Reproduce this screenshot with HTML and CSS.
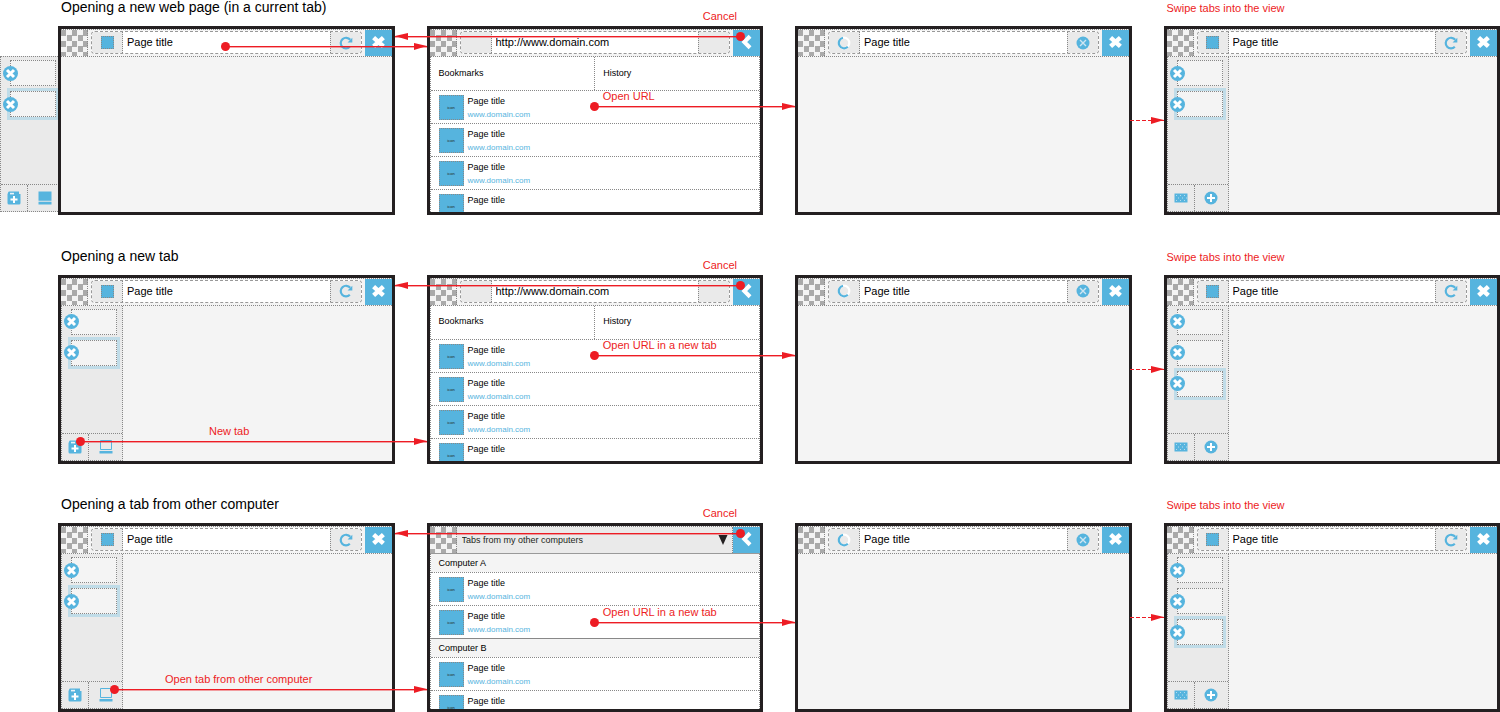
FILE: index.html
```html
<!DOCTYPE html>
<html lang="en">
<head>
    <meta charset="UTF-8">
    <meta name="viewport" content="width=device-width, initial-scale=1.0">
    <title>Browser tabs - interaction flows</title>
    <link rel="stylesheet" href="styles.css">
</head>
<body>
    <!-- Icon set -->
    <svg class="defs" aria-hidden="true">
        <symbol id="i-close" viewBox="0 0 27 27">
            <path d="M8 8.500L19 18.500M19 8.500L8 18.500" fill="none" stroke="#fff" stroke-width="5"/>
        </symbol>
        <symbol id="i-back" viewBox="0 0 27 27">
            <path d="M17.500 7L11 13.500L17.500 20" fill="none" stroke="#fff" stroke-width="4.500"/>
        </symbol>
        <symbol id="i-reload" viewBox="0 0 14 14">
            <path d="M10.800 10.800A5.300 5.300 0 1 1 11.200 3.800" fill="none" stroke="#56b4de" stroke-width="2.200"/>
            <path d="M13.300 1.800V6.500H8.600Z" fill="#56b4de"/>
        </symbol>
        <symbol id="i-loading" viewBox="0 0 14 14">
            <circle cx="7" cy="7" r="5.300" fill="none" stroke="#fff" stroke-width="2.200"/>
            <path d="M6 1.800A5.300 5.300 0 1 0 10.800 10.800" fill="none" stroke="#56b4de" stroke-width="2.200"/>
        </symbol>
        <symbol id="i-stop" viewBox="0 0 14 14">
            <circle cx="7" cy="7" r="6.500" fill="#56b4de"/>
            <path d="M4 4L10 10M10 4L4 10" fill="none" stroke="#cfe6f2" stroke-width="1.400"/>
        </symbol>
        <symbol id="i-remove" viewBox="0 0 15 15">
            <circle cx="7.500" cy="7.500" r="7.500" fill="#56b4de"/>
            <path d="M4 4L11 11M11 4L4 11" fill="none" stroke="#fff" stroke-width="3"/>
        </symbol>
        <symbol id="i-newtab" viewBox="0 0 14 14">
            <path d="M1 2Q1 .500 2 .500H12V3H13.500V12Q13.500 13.500 12 13.500H2Q.500 13.500 .500 12V3Z" fill="#56b4de"/>
            <path d="M3 1.800H7V3.400H3Z" fill="#ebf3f7"/>
            <path d="M7 5V12M3.500 8.500H10.500" stroke="#fff" stroke-width="2" fill="none"/>
        </symbol>
        <symbol id="i-computer" viewBox="0 0 14 14">
            <path d="M1.500 .500H12.500V9.500H1.500Z" fill="none" stroke="#56b4de"/>
            <path d="M.500 11H13.500V13.500H.500Z" fill="#56b4de"/>
        </symbol>
        <symbol id="i-computer-full" viewBox="0 0 14 14">
            <path d="M.500 .500H13.500V9.800H.500ZM.500 10.700H13.500V13.500H.500Z" fill="#56b4de"/>
        </symbol>
        <symbol id="i-grid" viewBox="0 0 14 14">
            <path d="M.500 2.500H13.500V11.500H.500Z" fill="#56b4de"/>
            <path d="M2 4.500H13M4 7H13M2 9.500H13" stroke="#b5dbec" stroke-width="1" stroke-dasharray="1 3" fill="none"/>
        </symbol>
        <symbol id="i-add" viewBox="0 0 14 14">
            <circle cx="7" cy="7" r="6.500" fill="#56b4de"/>
            <path d="M7 3V11M3 7H11" stroke="#fff" stroke-width="2" fill="none"/>
        </symbol>
    </svg>

    <main class="flows">
        <!-- Flow 1 -->
        <section class="flow">
            <header class="flow-head">
                <h2>Opening a new web page (in a current tab)</h2>
                <p class="swipe">Swipe tabs into the view</p>
            </header>
            <div class="steps">
                <div class="step">
                    <aside class="sidebar peek">
                        <ul class="tabs">
                            <li><button class="remove" aria-label="Close tab"><svg><use href="#i-remove"/></svg></button></li>
                            <li class="active"><button class="remove" aria-label="Close tab"><svg><use href="#i-remove"/></svg></button></li>
                        </ul>
                        <div class="tools">
                            <button aria-label="New tab"><svg><use href="#i-newtab"/></svg></button>
                            <button aria-label="Other computers"><svg><use href="#i-computer-full"/></svg></button>
                        </div>
                    </aside>
                    <div class="screen">
                        <div class="bar">
                            <span class="checker"></span>
                            <div class="address">
                                <span class="cell"><i class="favicon"></i></span>
                                <input type="text" value="Page title" aria-label="Address">
                                <button class="cell" aria-label="Reload"><svg><use href="#i-reload"/></svg></button>
                            </div>
                            <button class="square" aria-label="Close"><svg><use href="#i-close"/></svg></button>
                        </div>
                    </div>
                    <div class="arrow open-address"></div>
                </div>
                <div class="step">
                    <div class="screen">
                        <div class="bar">
                            <span class="checker"></span>
                            <div class="address">
                                <span class="cell"></span>
                                <input type="text" value="http://www.domain.com" aria-label="Address">
                                <span class="cell"></span>
                            </div>
                            <button class="square" aria-label="Back"><svg><use href="#i-back"/></svg></button>
                        </div>
                        <div class="panel">
                            <div class="sources">
                                <button>Bookmarks</button>
                                <button>History</button>
                            </div>
                            <ul class="pages">
                                <li><span class="icon">icon</span><div>Page title<a href="#">www.domain.com</a></div></li>
                                <li><span class="icon">icon</span><div>Page title<a href="#">www.domain.com</a></div></li>
                                <li><span class="icon">icon</span><div>Page title<a href="#">www.domain.com</a></div></li>
                                <li><span class="icon">icon</span><div>Page title</div></li>
                            </ul>
                        </div>
                    </div>
                    <div class="arrow back"><span>Cancel</span></div>
                    <div class="arrow open-url"><span>Open URL</span></div>
                </div>
                <div class="step">
                    <div class="screen">
                        <div class="bar">
                            <span class="checker"></span>
                            <div class="address">
                                <span class="cell"><svg><use href="#i-loading"/></svg></span>
                                <input type="text" value="Page title" aria-label="Address">
                                <button class="cell" aria-label="Stop"><svg><use href="#i-stop"/></svg></button>
                            </div>
                            <button class="square" aria-label="Close"><svg><use href="#i-close"/></svg></button>
                        </div>
                    </div>
                    <div class="arrow dashed"></div>
                </div>
                <div class="step">
                    <div class="screen">
                        <div class="bar">
                            <span class="checker"></span>
                            <div class="address">
                                <span class="cell"><i class="favicon"></i></span>
                                <input type="text" value="Page title" aria-label="Address">
                                <button class="cell" aria-label="Reload"><svg><use href="#i-reload"/></svg></button>
                            </div>
                            <button class="square" aria-label="Close"><svg><use href="#i-close"/></svg></button>
                        </div>
                        <aside class="sidebar">
                            <ul class="tabs">
                                <li><button class="remove" aria-label="Close tab"><svg><use href="#i-remove"/></svg></button></li>
                                <li class="active"><button class="remove" aria-label="Close tab"><svg><use href="#i-remove"/></svg></button></li>
                            </ul>
                            <div class="tools">
                                <button aria-label="All tabs"><svg><use href="#i-grid"/></svg></button>
                                <button aria-label="Add"><svg><use href="#i-add"/></svg></button>
                            </div>
                        </aside>
                    </div>
                </div>
            </div>
        </section>

        <!-- Flow 2 -->
        <section class="flow">
            <header class="flow-head">
                <h2>Opening a new tab</h2>
                <p class="swipe">Swipe tabs into the view</p>
            </header>
            <div class="steps">
                <div class="step">
                    <div class="screen">
                        <div class="bar">
                            <span class="checker"></span>
                            <div class="address">
                                <span class="cell"><i class="favicon"></i></span>
                                <input type="text" value="Page title" aria-label="Address">
                                <button class="cell" aria-label="Reload"><svg><use href="#i-reload"/></svg></button>
                            </div>
                            <button class="square" aria-label="Close"><svg><use href="#i-close"/></svg></button>
                        </div>
                        <aside class="sidebar">
                            <ul class="tabs">
                                <li><button class="remove" aria-label="Close tab"><svg><use href="#i-remove"/></svg></button></li>
                                <li class="active"><button class="remove" aria-label="Close tab"><svg><use href="#i-remove"/></svg></button></li>
                            </ul>
                            <div class="tools">
                                <button aria-label="New tab"><svg><use href="#i-newtab"/></svg></button>
                                <button aria-label="Other computers"><svg><use href="#i-computer"/></svg></button>
                            </div>
                        </aside>
                    </div>
                    <div class="arrow from-new-tab"><span>New tab</span></div>
                </div>
                <div class="step">
                    <div class="screen">
                        <div class="bar">
                            <span class="checker"></span>
                            <div class="address">
                                <span class="cell"></span>
                                <input type="text" value="http://www.domain.com" aria-label="Address">
                                <span class="cell"></span>
                            </div>
                            <button class="square" aria-label="Back"><svg><use href="#i-back"/></svg></button>
                        </div>
                        <div class="panel">
                            <div class="sources">
                                <button>Bookmarks</button>
                                <button>History</button>
                            </div>
                            <ul class="pages">
                                <li><span class="icon">icon</span><div>Page title<a href="#">www.domain.com</a></div></li>
                                <li><span class="icon">icon</span><div>Page title<a href="#">www.domain.com</a></div></li>
                                <li><span class="icon">icon</span><div>Page title<a href="#">www.domain.com</a></div></li>
                                <li><span class="icon">icon</span><div>Page title</div></li>
                            </ul>
                        </div>
                    </div>
                    <div class="arrow back"><span>Cancel</span></div>
                    <div class="arrow open-url"><span>Open URL in a new tab</span></div>
                </div>
                <div class="step">
                    <div class="screen">
                        <div class="bar">
                            <span class="checker"></span>
                            <div class="address">
                                <span class="cell"><svg><use href="#i-loading"/></svg></span>
                                <input type="text" value="Page title" aria-label="Address">
                                <button class="cell" aria-label="Stop"><svg><use href="#i-stop"/></svg></button>
                            </div>
                            <button class="square" aria-label="Close"><svg><use href="#i-close"/></svg></button>
                        </div>
                    </div>
                    <div class="arrow dashed"></div>
                </div>
                <div class="step">
                    <div class="screen">
                        <div class="bar">
                            <span class="checker"></span>
                            <div class="address">
                                <span class="cell"><i class="favicon"></i></span>
                                <input type="text" value="Page title" aria-label="Address">
                                <button class="cell" aria-label="Reload"><svg><use href="#i-reload"/></svg></button>
                            </div>
                            <button class="square" aria-label="Close"><svg><use href="#i-close"/></svg></button>
                        </div>
                        <aside class="sidebar">
                            <ul class="tabs">
                                <li><button class="remove" aria-label="Close tab"><svg><use href="#i-remove"/></svg></button></li>
                                <li><button class="remove" aria-label="Close tab"><svg><use href="#i-remove"/></svg></button></li>
                                <li class="active"><button class="remove" aria-label="Close tab"><svg><use href="#i-remove"/></svg></button></li>
                            </ul>
                            <div class="tools">
                                <button aria-label="All tabs"><svg><use href="#i-grid"/></svg></button>
                                <button aria-label="Add"><svg><use href="#i-add"/></svg></button>
                            </div>
                        </aside>
                    </div>
                </div>
            </div>
        </section>

        <!-- Flow 3 -->
        <section class="flow">
            <header class="flow-head">
                <h2>Opening a tab from other computer</h2>
                <p class="swipe">Swipe tabs into the view</p>
            </header>
            <div class="steps">
                <div class="step">
                    <div class="screen">
                        <div class="bar">
                            <span class="checker"></span>
                            <div class="address">
                                <span class="cell"><i class="favicon"></i></span>
                                <input type="text" value="Page title" aria-label="Address">
                                <button class="cell" aria-label="Reload"><svg><use href="#i-reload"/></svg></button>
                            </div>
                            <button class="square" aria-label="Close"><svg><use href="#i-close"/></svg></button>
                        </div>
                        <aside class="sidebar">
                            <ul class="tabs">
                                <li><button class="remove" aria-label="Close tab"><svg><use href="#i-remove"/></svg></button></li>
                                <li class="active"><button class="remove" aria-label="Close tab"><svg><use href="#i-remove"/></svg></button></li>
                            </ul>
                            <div class="tools">
                                <button aria-label="New tab"><svg><use href="#i-newtab"/></svg></button>
                                <button aria-label="Other computers"><svg><use href="#i-computer"/></svg></button>
                            </div>
                        </aside>
                    </div>
                    <div class="arrow from-computer"><span>Open tab from other computer</span></div>
                </div>
                <div class="step">
                    <div class="screen">
                        <div class="bar bar-select">
                            <span class="checker"></span>
                            <div class="picker">
                                <select aria-label="Tab source">
                                    <option>Tabs from my other computers</option>
                                </select>
                                <svg viewBox="0 0 9 10"><path d="M0 0H9L4.500 10Z" fill="#231f20"/></svg>
                            </div>
                            <button class="square" aria-label="Back"><svg><use href="#i-back"/></svg></button>
                        </div>
                        <div class="panel">
                            <h3>Computer A</h3>
                            <ul class="pages">
                                <li><span class="icon">icon</span><div>Page title<a href="#">www.domain.com</a></div></li>
                                <li><span class="icon">icon</span><div>Page title<a href="#">www.domain.com</a></div></li>
                            </ul>
                            <h3>Computer B</h3>
                            <ul class="pages">
                                <li><span class="icon">icon</span><div>Page title<a href="#">www.domain.com</a></div></li>
                                <li><span class="icon">icon</span><div>Page title</div></li>
                            </ul>
                        </div>
                    </div>
                    <div class="arrow back"><span>Cancel</span></div>
                    <div class="arrow open-url lower"><span>Open URL in a new tab</span></div>
                </div>
                <div class="step">
                    <div class="screen">
                        <div class="bar">
                            <span class="checker"></span>
                            <div class="address">
                                <span class="cell"><svg><use href="#i-loading"/></svg></span>
                                <input type="text" value="Page title" aria-label="Address">
                                <button class="cell" aria-label="Stop"><svg><use href="#i-stop"/></svg></button>
                            </div>
                            <button class="square" aria-label="Close"><svg><use href="#i-close"/></svg></button>
                        </div>
                    </div>
                    <div class="arrow dashed"></div>
                </div>
                <div class="step">
                    <div class="screen">
                        <div class="bar">
                            <span class="checker"></span>
                            <div class="address">
                                <span class="cell"><i class="favicon"></i></span>
                                <input type="text" value="Page title" aria-label="Address">
                                <button class="cell" aria-label="Reload"><svg><use href="#i-reload"/></svg></button>
                            </div>
                            <button class="square" aria-label="Close"><svg><use href="#i-close"/></svg></button>
                        </div>
                        <aside class="sidebar">
                            <ul class="tabs">
                                <li><button class="remove" aria-label="Close tab"><svg><use href="#i-remove"/></svg></button></li>
                                <li><button class="remove" aria-label="Close tab"><svg><use href="#i-remove"/></svg></button></li>
                                <li class="active"><button class="remove" aria-label="Close tab"><svg><use href="#i-remove"/></svg></button></li>
                            </ul>
                            <div class="tools">
                                <button aria-label="All tabs"><svg><use href="#i-grid"/></svg></button>
                                <button aria-label="Add"><svg><use href="#i-add"/></svg></button>
                            </div>
                        </aside>
                    </div>
                </div>
            </div>
        </section>
    </main>
</body>
</html>
```
FILE: styles.css
```css
* {
    box-sizing: border-box;
    margin: 0;
    padding: 0;
}
:root {
    --blue: #56b4de;
    --red: #ed1c24;
    --ink: #231f20;
    --dot: 1px dotted #888;
}
body {
    font-family: "Liberation Sans", Arial, Helvetica, sans-serif;
    background-color: #fff;
    color: #000;
}
button, input, select {
    font: inherit;
    color: inherit;
    border: none;
    border-radius: 0;
    background: none;
}
ul {
    list-style: none;
}
svg {
    display: block;
}
.defs {
    position: absolute;
    width: 0;
    height: 0;
}
.flows {
    min-height: 100vh;
    display: flex;
    flex-direction: column;
    justify-content: space-between;
    gap: 32px;
}
.flow-head, .steps {
    display: grid;
    grid-template-columns: repeat(4, 1fr);
    gap: 32px;
    padding-left: 58px;
}
.flow-head {
    height: 26px;
}
.flow-head h2 {
    grid-column: span 3;
    padding-left: 3px;
    font-size: 14px;
    font-weight: 400;
    line-height: 15px;
}
.swipe {
    padding-left: 3px;
    font-size: 11px;
    line-height: 16px;
    color: var(--red);
}
.step {
    position: relative;
}

/* Device frame */
.screen {
    position: relative;
    display: flex;
    flex-direction: column;
    height: 189px;
    border: 3px solid var(--ink);
    background-color: #f4f4f4;
    overflow: hidden;
}
.bar {
    display: flex;
    flex: none;
    height: 28px;
    border-top: var(--dot);
    border-bottom: var(--dot);
}
.checker {
    width: 27px;
    border-right: var(--dot);
    background: repeating-conic-gradient(#f4f4f4 0 25%, #aaa 0 50%) 0 0 / 11px 11px;
}
.address {
    flex: 1;
    display: flex;
    min-width: 0;
    margin: 1px 3px 2px;
    border: 1px dashed #999;
    border-radius: 4px;
    background-color: #fff;
    overflow: hidden;
}
.address input {
    flex: 1;
    min-width: 0;
    padding: 0 4px 1px;
    font-size: 11px;
}
.cell {
    display: flex;
    flex: none;
    align-items: center;
    justify-content: center;
    width: 31px;
    background-color: #eaeaea;
}
.cell:first-child {
    border-right: var(--dot);
}
.cell:last-child {
    border-left: var(--dot);
}
.cell svg {
    width: 14px;
    height: 14px;
}
.favicon {
    width: 13px;
    height: 13px;
    border: var(--dot);
    background-color: var(--blue);
}
.square {
    flex: none;
    width: 27px;
    padding-bottom: 2px;
    background-color: var(--blue);
}
.square svg {
    width: 27px;
    height: 24px;
}

/* Tab sidebar */
.sidebar {
    flex: 1;
    display: flex;
    flex-direction: column;
    justify-content: space-between;
    width: 62px;
    border: var(--dot);
    border-top: none;
    background-color: #eaeaea;
}
.sidebar.peek {
    position: absolute;
    left: -58px;
    top: 30px;
    bottom: 3px;
    border-top: var(--dot);
}
.tabs {
    display: flex;
    flex-direction: column;
    gap: 5px;
    padding: 3px 5px 0 9px;
}
.tabs li {
    display: flex;
    align-items: center;
    height: 26px;
    border: var(--dot);
    background-color: #f4f4f4;
}
.tabs .active {
    box-shadow: 0 0 0 3px #c0dce8;
}
.remove {
    width: 15px;
    height: 15px;
    margin-left: -8px;
}
.remove svg {
    width: 15px;
    height: 15px;
}
.tools {
    display: flex;
    height: 27px;
    border-top: var(--dot);
}
.tools button {
    flex: 1;
    display: flex;
    align-items: center;
    justify-content: center;
}
.tools button:first-child {
    flex: none;
    width: 27px;
    border-right: var(--dot);
}
.tools svg {
    width: 14px;
    height: 14px;
}

/* Bookmarks, history and remote tabs */
.panel {
    flex: 1;
    border: solid #888;
    border-width: 0 1px;
    border-style: dotted;
    background-color: #fff;
    font-size: 9px;
}
.sources {
    display: flex;
    height: 33px;
}
.sources button {
    flex: 1;
    padding: 0 0 2px 8px;
    text-align: left;
}
.sources button + button {
    border-left: var(--dot);
}
.pages li {
    display: flex;
    gap: 4px;
    height: 33px;
    padding: 4px 8px;
    border-top: var(--dot);
    line-height: 13px;
}
.pages a {
    display: block;
    font-size: 8px;
    color: var(--blue);
    text-decoration: none;
}
.icon {
    width: 25px;
    height: 25px;
    border: var(--dot);
    background-color: var(--blue);
    color: var(--ink);
    font-size: 4px;
    line-height: 23px;
    text-align: center;
}
.panel h3 {
    height: 18px;
    padding-left: 8px;
    background-color: #f4f4f4;
    font-size: 9px;
    font-weight: 400;
    line-height: 18px;
}
.panel .pages + h3 {
    height: 19px;
    border-top: 1px solid #888;
}
.bar-select {
    border-bottom: 1px solid #999;
}
.picker {
    position: relative;
    flex: 1;
    display: flex;
    border-right: var(--dot);
    background-color: #eaeaea;
}
.picker select {
    flex: 1;
    appearance: none;
    padding: 0 0 1px 5px;
    font-size: 9px;
    color: var(--ink);
}
.picker svg {
    position: absolute;
    right: 4px;
    top: 8px;
    width: 10px;
    height: 10px;
    pointer-events: none;
}

/* Annotations drawn over the screens */
.arrow {
    position: absolute;
    z-index: 1;
    right: -32px;
    height: 1px;
    background-color: var(--red);
    box-shadow: 0 1px rgba(237, 28, 36, 0.4);
    color: var(--red);
    font-size: 11px;
    line-height: 14px;
    white-space: nowrap;
}
.arrow::before {
    content: "";
    position: absolute;
    left: -5px;
    top: -4px;
    width: 9px;
    height: 9px;
    border-radius: 50%;
    background-color: var(--red);
}
.arrow::after {
    content: "";
    position: absolute;
    right: 0;
    top: -3px;
    border: solid transparent;
    border-width: 3px 0 4px 13px;
    border-left-color: var(--red);
}
.arrow span {
    position: absolute;
    left: 8px;
    bottom: 4px;
}
.arrow.open-address {
    left: 50%;
    top: 20px;
}
.arrow.back {
    left: -32px;
    right: 23px;
    top: 10px;
}
.arrow.back::before {
    left: auto;
    right: -5px;
}
.arrow.back::after {
    right: auto;
    left: 0;
    border-width: 3px 13px 4px 0;
    border-right-color: var(--red);
}
.arrow.back span {
    left: auto;
    right: 3px;
    bottom: 14px;
}
.arrow.open-url {
    left: 50%;
    top: 80px;
}
.arrow.open-url.lower {
    top: 99px;
}
.arrow.from-new-tab {
    left: 23px;
    top: 166px;
}
.arrow.from-new-tab span {
    left: 128px;
}
.arrow.from-computer {
    left: 57px;
    top: 166px;
}
.arrow.from-computer span {
    left: 50px;
}
.arrow.dashed {
    left: calc(100% - 2px);
    top: 94px;
    background: repeating-linear-gradient(90deg, var(--red) 0 4px, transparent 4px 6px);
    box-shadow: none;
}
.arrow.dashed::before {
    display: none;
}
```
